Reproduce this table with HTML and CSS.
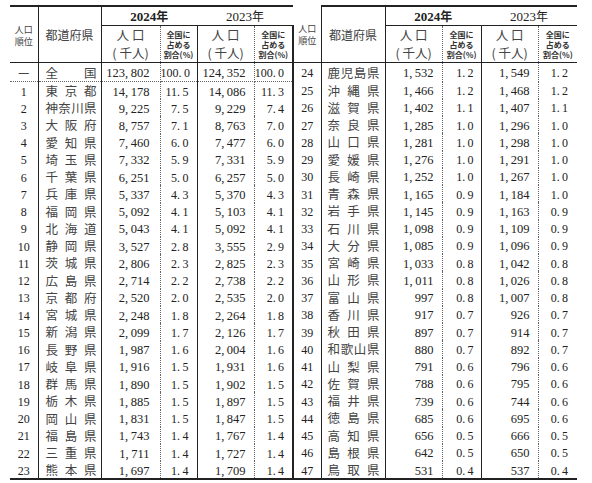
FILE: index.html
```html
<!DOCTYPE html>
<html lang="ja">
<head>
<meta charset="utf-8">
<title>都道府県別人口</title>
<link rel="stylesheet" href="styles.css">
</head>
<body>
<div class="page">
<table class="tbl tl">
<colgroup><col class="c-rk"><col class="c-nm"><col class="c-pa"><col class="c-sa"><col class="c-pb"><col class="c-sb"></colgroup>
<thead>
<tr class="h1">
<th class="rk hr" rowspan="2"><span class="rkh">人口<br>順位</span></th>
<th class="nm hn" rowspan="2">都道府県</th>
<th class="yr y24" colspan="2">2024<span class="j">年</span></th>
<th class="yr y23" colspan="2">2023<span class="j">年</span></th>
</tr>
<tr class="h2">
<th class="p pa hp">人 口<br>( 千人)</th>
<th class="s sa hs">全国に<br>占める<br>割合(%)</th>
<th class="p pb hp">人 口<br>( 千人)</th>
<th class="s sb hs">全国に<br>占める<br>割合(%)</th>
</tr>
</thead>
<tbody>
<tr class="all"><td class="rk"><span class="dash">一</span></td><td class="nm">全国</td><td class="p pa">123,&thinsp;802</td><td class="s sa">100.&thinsp;0</td><td class="p pb">124,&thinsp;352</td><td class="s sb">100.&thinsp;0</td></tr>
<tr><td class="rk">1</td><td class="nm">東京都</td><td class="p pa">14,&thinsp;178</td><td class="s sa">11.&thinsp;5</td><td class="p pb">14,&thinsp;086</td><td class="s sb">11.&thinsp;3</td></tr>
<tr><td class="rk">2</td><td class="nm">神奈川県</td><td class="p pa">9,&thinsp;225</td><td class="s sa">7.&thinsp;5</td><td class="p pb">9,&thinsp;229</td><td class="s sb">7.&thinsp;4</td></tr>
<tr><td class="rk">3</td><td class="nm">大阪府</td><td class="p pa">8,&thinsp;757</td><td class="s sa">7.&thinsp;1</td><td class="p pb">8,&thinsp;763</td><td class="s sb">7.&thinsp;0</td></tr>
<tr><td class="rk">4</td><td class="nm">愛知県</td><td class="p pa">7,&thinsp;460</td><td class="s sa">6.&thinsp;0</td><td class="p pb">7,&thinsp;477</td><td class="s sb">6.&thinsp;0</td></tr>
<tr><td class="rk">5</td><td class="nm">埼玉県</td><td class="p pa">7,&thinsp;332</td><td class="s sa">5.&thinsp;9</td><td class="p pb">7,&thinsp;331</td><td class="s sb">5.&thinsp;9</td></tr>
<tr><td class="rk">6</td><td class="nm">千葉県</td><td class="p pa">6,&thinsp;251</td><td class="s sa">5.&thinsp;0</td><td class="p pb">6,&thinsp;257</td><td class="s sb">5.&thinsp;0</td></tr>
<tr><td class="rk">7</td><td class="nm">兵庫県</td><td class="p pa">5,&thinsp;337</td><td class="s sa">4.&thinsp;3</td><td class="p pb">5,&thinsp;370</td><td class="s sb">4.&thinsp;3</td></tr>
<tr><td class="rk">8</td><td class="nm">福岡県</td><td class="p pa">5,&thinsp;092</td><td class="s sa">4.&thinsp;1</td><td class="p pb">5,&thinsp;103</td><td class="s sb">4.&thinsp;1</td></tr>
<tr><td class="rk">9</td><td class="nm">北海道</td><td class="p pa">5,&thinsp;043</td><td class="s sa">4.&thinsp;1</td><td class="p pb">5,&thinsp;092</td><td class="s sb">4.&thinsp;1</td></tr>
<tr><td class="rk">10</td><td class="nm">静岡県</td><td class="p pa">3,&thinsp;527</td><td class="s sa">2.&thinsp;8</td><td class="p pb">3,&thinsp;555</td><td class="s sb">2.&thinsp;9</td></tr>
<tr><td class="rk">11</td><td class="nm">茨城県</td><td class="p pa">2,&thinsp;806</td><td class="s sa">2.&thinsp;3</td><td class="p pb">2,&thinsp;825</td><td class="s sb">2.&thinsp;3</td></tr>
<tr><td class="rk">12</td><td class="nm">広島県</td><td class="p pa">2,&thinsp;714</td><td class="s sa">2.&thinsp;2</td><td class="p pb">2,&thinsp;738</td><td class="s sb">2.&thinsp;2</td></tr>
<tr><td class="rk">13</td><td class="nm">京都府</td><td class="p pa">2,&thinsp;520</td><td class="s sa">2.&thinsp;0</td><td class="p pb">2,&thinsp;535</td><td class="s sb">2.&thinsp;0</td></tr>
<tr><td class="rk">14</td><td class="nm">宮城県</td><td class="p pa">2,&thinsp;248</td><td class="s sa">1.&thinsp;8</td><td class="p pb">2,&thinsp;264</td><td class="s sb">1.&thinsp;8</td></tr>
<tr><td class="rk">15</td><td class="nm">新潟県</td><td class="p pa">2,&thinsp;099</td><td class="s sa">1.&thinsp;7</td><td class="p pb">2,&thinsp;126</td><td class="s sb">1.&thinsp;7</td></tr>
<tr><td class="rk">16</td><td class="nm">長野県</td><td class="p pa">1,&thinsp;987</td><td class="s sa">1.&thinsp;6</td><td class="p pb">2,&thinsp;004</td><td class="s sb">1.&thinsp;6</td></tr>
<tr><td class="rk">17</td><td class="nm">岐阜県</td><td class="p pa">1,&thinsp;916</td><td class="s sa">1.&thinsp;5</td><td class="p pb">1,&thinsp;931</td><td class="s sb">1.&thinsp;6</td></tr>
<tr><td class="rk">18</td><td class="nm">群馬県</td><td class="p pa">1,&thinsp;890</td><td class="s sa">1.&thinsp;5</td><td class="p pb">1,&thinsp;902</td><td class="s sb">1.&thinsp;5</td></tr>
<tr><td class="rk">19</td><td class="nm">栃木県</td><td class="p pa">1,&thinsp;885</td><td class="s sa">1.&thinsp;5</td><td class="p pb">1,&thinsp;897</td><td class="s sb">1.&thinsp;5</td></tr>
<tr><td class="rk">20</td><td class="nm">岡山県</td><td class="p pa">1,&thinsp;831</td><td class="s sa">1.&thinsp;5</td><td class="p pb">1,&thinsp;847</td><td class="s sb">1.&thinsp;5</td></tr>
<tr><td class="rk">21</td><td class="nm">福島県</td><td class="p pa">1,&thinsp;743</td><td class="s sa">1.&thinsp;4</td><td class="p pb">1,&thinsp;767</td><td class="s sb">1.&thinsp;4</td></tr>
<tr><td class="rk">22</td><td class="nm">三重県</td><td class="p pa">1,&thinsp;711</td><td class="s sa">1.&thinsp;4</td><td class="p pb">1,&thinsp;727</td><td class="s sb">1.&thinsp;4</td></tr>
<tr class="last"><td class="rk">23</td><td class="nm">熊本県</td><td class="p pa">1,&thinsp;697</td><td class="s sa">1.&thinsp;4</td><td class="p pb">1,&thinsp;709</td><td class="s sb">1.&thinsp;4</td></tr>
</tbody>
</table>

<table class="tbl tr">
<colgroup><col class="c-rk2"><col class="c-nm2"><col class="c-pa2"><col class="c-sa2"><col class="c-pb2"><col class="c-sb2"></colgroup>
<thead>
<tr class="h1">
<th class="rk hr notop" rowspan="2"><span class="rkh">人口<br>順位</span></th>
<th class="nm hn" rowspan="2">都道府県</th>
<th class="yr y24" colspan="2">2024<span class="j">年</span></th>
<th class="yr y23" colspan="2">2023<span class="j">年</span></th>
</tr>
<tr class="h2">
<th class="p pa hp">人 口<br>( 千人)</th>
<th class="s sa hs">全国に<br>占める<br>割合(%)</th>
<th class="p pb hp">人 口<br>( 千人)</th>
<th class="s sb hs">全国に<br>占める<br>割合(%)</th>
</tr>
</thead>
<tbody>
<tr class="first"><td class="rk">24</td><td class="nm">鹿児島県</td><td class="p pa">1,&thinsp;532</td><td class="s sa">1.&thinsp;2</td><td class="p pb">1,&thinsp;549</td><td class="s sb">1.&thinsp;2</td></tr>
<tr><td class="rk">25</td><td class="nm">沖縄県</td><td class="p pa">1,&thinsp;466</td><td class="s sa">1.&thinsp;2</td><td class="p pb">1,&thinsp;468</td><td class="s sb">1.&thinsp;2</td></tr>
<tr><td class="rk">26</td><td class="nm">滋賀県</td><td class="p pa">1,&thinsp;402</td><td class="s sa">1.&thinsp;1</td><td class="p pb">1,&thinsp;407</td><td class="s sb">1.&thinsp;1</td></tr>
<tr><td class="rk">27</td><td class="nm">奈良県</td><td class="p pa">1,&thinsp;285</td><td class="s sa">1.&thinsp;0</td><td class="p pb">1,&thinsp;296</td><td class="s sb">1.&thinsp;0</td></tr>
<tr><td class="rk">28</td><td class="nm">山口県</td><td class="p pa">1,&thinsp;281</td><td class="s sa">1.&thinsp;0</td><td class="p pb">1,&thinsp;298</td><td class="s sb">1.&thinsp;0</td></tr>
<tr><td class="rk">29</td><td class="nm">愛媛県</td><td class="p pa">1,&thinsp;276</td><td class="s sa">1.&thinsp;0</td><td class="p pb">1,&thinsp;291</td><td class="s sb">1.&thinsp;0</td></tr>
<tr><td class="rk">30</td><td class="nm">長崎県</td><td class="p pa">1,&thinsp;252</td><td class="s sa">1.&thinsp;0</td><td class="p pb">1,&thinsp;267</td><td class="s sb">1.&thinsp;0</td></tr>
<tr><td class="rk">31</td><td class="nm">青森県</td><td class="p pa">1,&thinsp;165</td><td class="s sa">0.&thinsp;9</td><td class="p pb">1,&thinsp;184</td><td class="s sb">1.&thinsp;0</td></tr>
<tr><td class="rk">32</td><td class="nm">岩手県</td><td class="p pa">1,&thinsp;145</td><td class="s sa">0.&thinsp;9</td><td class="p pb">1,&thinsp;163</td><td class="s sb">0.&thinsp;9</td></tr>
<tr><td class="rk">33</td><td class="nm">石川県</td><td class="p pa">1,&thinsp;098</td><td class="s sa">0.&thinsp;9</td><td class="p pb">1,&thinsp;109</td><td class="s sb">0.&thinsp;9</td></tr>
<tr><td class="rk">34</td><td class="nm">大分県</td><td class="p pa">1,&thinsp;085</td><td class="s sa">0.&thinsp;9</td><td class="p pb">1,&thinsp;096</td><td class="s sb">0.&thinsp;9</td></tr>
<tr><td class="rk">35</td><td class="nm">宮崎県</td><td class="p pa">1,&thinsp;033</td><td class="s sa">0.&thinsp;8</td><td class="p pb">1,&thinsp;042</td><td class="s sb">0.&thinsp;8</td></tr>
<tr><td class="rk">36</td><td class="nm">山形県</td><td class="p pa">1,&thinsp;011</td><td class="s sa">0.&thinsp;8</td><td class="p pb">1,&thinsp;026</td><td class="s sb">0.&thinsp;8</td></tr>
<tr><td class="rk">37</td><td class="nm">富山県</td><td class="p pa">997</td><td class="s sa">0.&thinsp;8</td><td class="p pb">1,&thinsp;007</td><td class="s sb">0.&thinsp;8</td></tr>
<tr><td class="rk">38</td><td class="nm">香川県</td><td class="p pa">917</td><td class="s sa">0.&thinsp;7</td><td class="p pb">926</td><td class="s sb">0.&thinsp;7</td></tr>
<tr><td class="rk">39</td><td class="nm">秋田県</td><td class="p pa">897</td><td class="s sa">0.&thinsp;7</td><td class="p pb">914</td><td class="s sb">0.&thinsp;7</td></tr>
<tr><td class="rk">40</td><td class="nm">和歌山県</td><td class="p pa">880</td><td class="s sa">0.&thinsp;7</td><td class="p pb">892</td><td class="s sb">0.&thinsp;7</td></tr>
<tr><td class="rk">41</td><td class="nm">山梨県</td><td class="p pa">791</td><td class="s sa">0.&thinsp;6</td><td class="p pb">796</td><td class="s sb">0.&thinsp;6</td></tr>
<tr><td class="rk">42</td><td class="nm">佐賀県</td><td class="p pa">788</td><td class="s sa">0.&thinsp;6</td><td class="p pb">795</td><td class="s sb">0.&thinsp;6</td></tr>
<tr><td class="rk">43</td><td class="nm">福井県</td><td class="p pa">739</td><td class="s sa">0.&thinsp;6</td><td class="p pb">744</td><td class="s sb">0.&thinsp;6</td></tr>
<tr><td class="rk">44</td><td class="nm">徳島県</td><td class="p pa">685</td><td class="s sa">0.&thinsp;6</td><td class="p pb">695</td><td class="s sb">0.&thinsp;6</td></tr>
<tr><td class="rk">45</td><td class="nm">高知県</td><td class="p pa">656</td><td class="s sa">0.&thinsp;5</td><td class="p pb">666</td><td class="s sb">0.&thinsp;5</td></tr>
<tr><td class="rk">46</td><td class="nm">島根県</td><td class="p pa">642</td><td class="s sa">0.&thinsp;5</td><td class="p pb">650</td><td class="s sb">0.&thinsp;5</td></tr>
<tr class="last"><td class="rk">47</td><td class="nm">鳥取県</td><td class="p pa">531</td><td class="s sa">0.&thinsp;4</td><td class="p pb">537</td><td class="s sb">0.&thinsp;4</td></tr>
</tbody>
</table>
</div>
</body>
</html>
```

FILE: styles.css
```css
* { box-sizing: border-box; }

html, body {
  margin: 0;
  padding: 0;
  background: #fff;
}

body {
  color: #222;
  font-family: "Liberation Serif", "Noto Sans CJK JP", serif;
  font-size: 12px;
}

.page {
  display: flex;
  align-items: flex-start;
  padding: 5px 0 0 10px;
}

.tbl {
  border-collapse: collapse;
  table-layout: fixed;
}

.tl { width: 283px; }
.tr { width: 283px; }

.c-rk { width: 28px; }
.c-nm { width: 63px; }
.c-pa { width: 59px; }
.c-sa { width: 37px; }
.c-pb { width: 57px; }
.c-sb { width: 39px; }

.c-rk2 { width: 27px; }
.c-nm2 { width: 64px; }
.c-pa2 { width: 57px; }
.c-sa2 { width: 39px; }
.c-pb2 { width: 57px; }
.c-sb2 { width: 39px; }

th, td {
  padding: 0;
  font-weight: normal;
  white-space: nowrap;
  overflow: hidden;
}

/* header */
.h1 th {
  height: 19px;
  border-top: 2px solid #222;
}
.h1 th.notop { border-top: none; }

.h2 th { height: 36px; }

thead th {
  border-bottom: 1px solid #222;
  vertical-align: middle;
  text-align: center;
}

.yr {
  border-bottom: 1.5px solid #222;
  font-size: 13px;
  line-height: 16px;
  padding-top: 1px;
}
.y24 { font-weight: bold; }
.y24 .j { font-weight: bold; }
.j { font-family: "Noto Sans CJK JP", sans-serif; font-size: 12px; }

.rkh {
  display: block;
  font-family: "Noto Sans CJK JP", sans-serif;
  font-size: 9px;
  line-height: 12px;
  padding-top: 2px;
  color: #444;
}

.hn {
  font-family: "Noto Sans CJK JP", sans-serif;
  font-size: 12px;
  color: #444;
}

.hp {
  font-family: "Noto Sans CJK JP", sans-serif;
  font-size: 12.5px;
  line-height: 18px;
  color: #444;
}

.hs {
  font-family: "Noto Sans CJK JP", sans-serif;
  font-size: 8px;
  font-weight: bold;
  line-height: 10px;
  padding-top: 1px;
  color: #333;
}

/* column rules */
.nm {
  border-left: 1px solid #222;
  border-right: 1px solid #222;
}
.pa, .pb { border-right: 1px dotted #666; }
.sa { border-right: 1.5px solid #222; }
.tl .sb { border-right: 2px solid #222; }

/* body rows */
tbody td {
  height: 17.25px;
  line-height: 14px;
  padding-top: 2px;
  vertical-align: middle;
}

.rk {
  text-align: center;
}

.dash {
  font-family: "Noto Sans CJK JP", sans-serif;
  font-size: 11px;
  color: #444;
}

tbody .nm {
  font-family: "Noto Sans CJK JP", sans-serif;
  font-size: 12.5px;
  line-height: 17px;
  text-align: justify;
  text-align-last: justify;
  padding-left: 7px;
  padding-right: 4px;
  padding-top: 0;
  color: #444;
}
.tr tbody .nm {
  padding-left: 6px;
  padding-right: 5px;
}

tbody .p, tbody .s {
  text-align: right;
  padding-right: 8px;
}
tbody .p { font-size: 12.5px; }
.tl tbody .pa { padding-right: 10px; }
.tr tbody .sa { padding-right: 7px; }
.tr tbody .sb { padding-right: 9px; }

.all td { border-bottom: 1px dotted #666; height: 19px; }
.first td { height: 19px; }
.last td { border-bottom: 2px solid #222; }
```
